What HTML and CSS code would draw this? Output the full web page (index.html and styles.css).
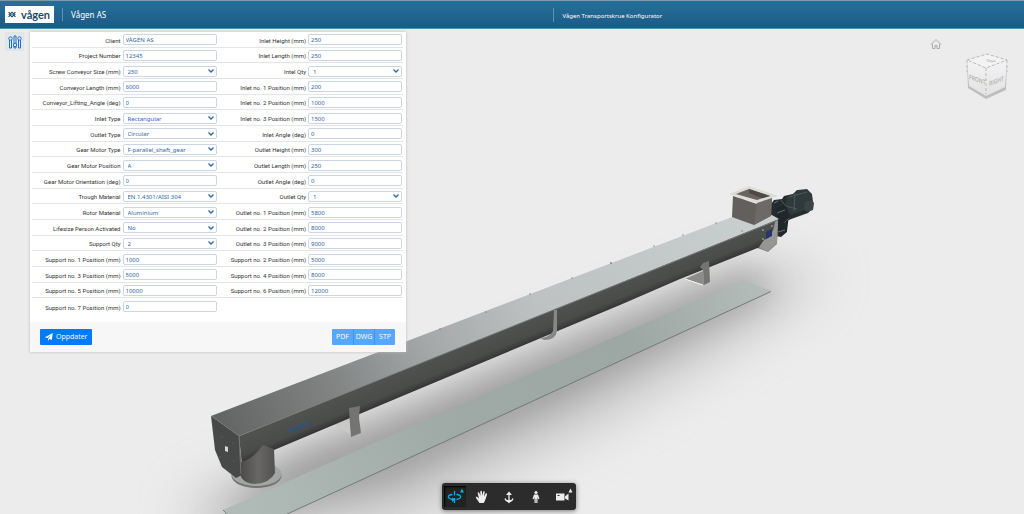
FILE: index.html
```
<!DOCTYPE html>
<html lang="en">
<head>
<meta charset="utf-8">
<meta name="viewport" content="width=device-width, initial-scale=1">
<title>Vågen Transportskrue Konfigurator</title>
<link rel="stylesheet" href="styles.css">
</head>
<body>
<header class="topbar">
  <div class="brand">
    <div class="logo">
      <svg class="logo-mark" viewBox="0 0 14 12" aria-hidden="true"><path d="M1 2l3 3 3-3 3 3 3-3M1 10l3-3 3 3 3-3 3 3M1 6h2M6 6h2M11 6h2"/></svg>
      <span>vågen</span>
    </div>
    <span class="company">Vågen AS</span>
  </div>
  <h1 class="title">Vågen Transportskrue Konfigurator</h1>
</header>

<svg class="scene" viewBox="0 0 1024 514" preserveAspectRatio="xMinYMin slice" role="img" aria-label="3D view of the screw conveyor">
  <defs>
    <linearGradient id="lid" gradientUnits="userSpaceOnUse" x1="225" y1="425" x2="755" y2="210">
      <stop offset="0" stop-color="#646665"/><stop offset=".2" stop-color="#828484"/><stop offset=".38" stop-color="#a4a8a8"/><stop offset=".58" stop-color="#bdc1c2"/><stop offset="1" stop-color="#c9cecf"/>
    </linearGradient>
    <linearGradient id="side" gradientUnits="userSpaceOnUse" x1="400" y1="371" x2="410" y2="395">
      <stop offset="0" stop-color="#505250"/><stop offset=".65" stop-color="#4a4c4a"/><stop offset=".85" stop-color="#3a3b3a"/><stop offset="1" stop-color="#292a29"/>
    </linearGradient>
    <linearGradient id="pipe"><stop offset="0" stop-color="#4c4b49"/><stop offset=".5" stop-color="#696765"/><stop offset="1" stop-color="#53514f"/></linearGradient>
    <linearGradient id="leftface" x2="0" y2="1"><stop offset="0" stop-color="#f4f4f4"/><stop offset="1" stop-color="#e2e2e2"/></linearGradient>
    <linearGradient id="plate" gradientUnits="userSpaceOnUse" x1="250" y1="510" x2="760" y2="285">
      <stop offset="0" stop-color="#b0bbb7"/><stop offset=".4" stop-color="#9fa9a5"/><stop offset=".75" stop-color="#9da7a3"/><stop offset="1" stop-color="#b3bcb8"/>
    </linearGradient>
    <filter id="soft" x="-30%" y="-30%" width="160%" height="160%"><feGaussianBlur stdDeviation="17"/></filter>
    <filter id="softer" x="-30%" y="-30%" width="160%" height="160%"><feGaussianBlur stdDeviation="27"/></filter>
  </defs>
  <path d="M190 500L400 420 560 340 760 265 830 275 720 350 600 420 400 520 200 550z" fill="#a8a8a8" opacity=".6" filter="url(#softer)"/>
  <path d="M285 455L560 346 745 268 775 290 560 400 390 480 220 520z" fill="#777" opacity=".52" filter="url(#soft)"/>
  <path d="M223 510L743 280 771 291 287 514H226z" fill="url(#plate)"/>
  <path d="M285 515L771 291.500M223 510l4 4" fill="none" stroke="#727b78"/>

  <!-- gear motor -->
  <path d="M771 204l3-4 8-1 2-3 9-2 4-4 4 1 7 1 4 4 1 12-5 5-14 5-8 3 1 11-6 5-10-2-2-9z" fill="#262d2e"/>
  <path d="M787 197l8-4 3-3 9-1 5 5 1 9-4 6-10 3-8 3-6-6z" fill="#303a3b"/>
  <path d="M776 208l10-4 3 11-2 16-6 4-6-5z" fill="#20272a"/>
  <path d="M780 199l6 7 11 3M789 197l18-5M795 193l-1 18M789 218l-5 5" stroke="#4c595c" fill="none"/>
  <path d="M805 202l7-2 2 3-1 7-6 2-3-3z" fill="#394445"/>
  <path d="M774 203l4-2M777 213l8-3M778 232l7-2" stroke="#66706f" fill="none"/>

  <!-- supports behind the trough -->
  <path d="M333 424l17-8 3 20z" fill="#c9c9c7"/>
  <path d="M685 279l18-8 1 14z" fill="#8c8d8b"/><path d="M685 279l18 6" stroke="#f6f6f6"/>
  <path d="M757 248l14-13 7-15-1 24-9 8z" fill="#8b8d8b"/>

  <!-- trough -->
  <path d="M239 436L778 219 776 232Q774 243 760 247L680 279 620 305 400 397 274 450 242 466z" fill="url(#side)"/>
  <path d="M211 416L732 217 740 197 779 219 239 436z" fill="url(#lid)"/>
  <path d="M239 436L778 220" stroke="#777a79" fill="none"/>
  <g fill="#777b7b"><circle cx="440" cy="329" r=".7"/><circle cx="486" cy="312" r=".7"/><circle cx="530" cy="294" r=".7"/><circle cx="572" cy="278" r=".7"/><circle cx="611" cy="263" r=".9"/><circle cx="654" cy="246" r=".7"/><circle cx="683" cy="235" r=".7"/><circle cx="716" cy="223" r=".7"/><circle cx="742" cy="231" r=".7"/></g>

  <!-- round outlet -->
  <ellipse cx="256.500" cy="476" rx="25" ry="12" fill="#717371"/>
  <ellipse cx="256.500" cy="474" rx="25" ry="12" fill="#a2a5a3"/>
  <path d="M241 462q12-3 22-17l11 4 1 24q-5 10-20 11-10 0-14-7z" fill="url(#pipe)"/>
  <path d="M211 416l28 20 3 39-6 3-14-11-7-17z" fill="#464948"/>
  <path d="M212 416l27 20 2 38" stroke="#707372" fill="none"/>
  <path d="M225 446l3 1v5l-3-1z" fill="#d5d5d5"/>
  <g fill="#707372"><circle cx="222" cy="437" r=".6"/><circle cx="233" cy="443" r=".6"/><circle cx="220" cy="457" r=".6"/><circle cx="234" cy="461" r=".6"/></g>

  <!-- support legs -->
  <path d="M349 408l11-2-1 12 2 15-10 4-1-12z" fill="#747472"/>
  <path d="M554 310h3v21q-1 9-13 9l-4-2q9 0 13-7z" fill="#858886"/>
  <path d="M700 267l3-4 6-2 1 21-6 3-1-15z" fill="#747472"/>
  <path d="M764 240q9-3 11-18l3-2-1 22-9 9-9-4z" fill="#969795"/>
  <path d="M766 232l6-3v7l-6 3z" fill="#27356e"/><g fill="#c9cac8"><circle cx="763" cy="230" r=".8"/><circle cx="763" cy="239" r=".8"/><circle cx="772" cy="226" r=".8"/></g>

  <!-- rectangular inlet -->
  <path d="M733 196l24 8 15-6-1 18-17 9-22-8z" fill="#625f5d"/>
  <path d="M757 202l15-5-1 18-17 10z" fill="#6d6966"/>
  <path d="M729 194l20-8 29 10-21 7z" fill="#dcdcd7"/>
  <path d="M736 194l13-5 21 7-13 4z" fill="#68635e"/>
  <path d="M749 189l21 7-8 2-13-5z" fill="#4c4946"/>
  <text class="decal" transform="translate(289 433) rotate(-21)">VÅGEN AS</text>

  <!-- navigation cube -->
  <g class="cube">
    <path d="M967 60l20-6 20 6-1 30-20 9-18-11z" fill="#bebebe"/>
    <path d="M967 60l20-6 20 6-21 8z" fill="#f3f3f3"/>
    <path d="M967 60l19 8v28l-17-10z" fill="url(#leftface)"/>
    <path d="M1007 60l-21 8v28l19-9z" fill="url(#leftface)"/>
    <path d="M967 60l20-6 20 6-21 8zM986 68v26M967 60v12M1007 60v12" fill="none" stroke="#bbb" stroke-dasharray="3 2"/>
    <text transform="matrix(1 .35 0 1.300 969 79)">FRONT</text>
    <text transform="matrix(1 -.35 0 1.300 989 86)">RIGHT</text>
    <text transform="matrix(1 .2 -.8 .5 984 61)">TOP</text>
  </g>
</svg>

<main class="workspace">
  <button class="settings" type="button" aria-label="Parameters">
    <svg viewBox="0 0 14 14" aria-hidden="true"><path class="thin" d="M1.500 5v8h2V5M6 9V1h2v8M6 11v2h2v-2M10.500 5v8h2V5"/><circle cx="2.500" cy="3.500" r="1.700"/><circle cx="7" cy="10" r="1.700"/><circle cx="11.500" cy="3.500" r="1.700"/></svg>
  </button>

  <form class="panel">
    <div class="params">
      <div class="field"><label for="client">Client</label><input id="client" value="VÅGEN AS"></div>
      <div class="field"><label for="ih">Inlet Height (mm)</label><input id="ih" value="250"></div>
      <div class="field"><label for="pn">Project Number</label><input id="pn" value="12345"></div>
      <div class="field"><label for="il">Inlet Length (mm)</label><input id="il" value="250"></div>
      <div class="field"><label for="size">Screw Conveyor Size (mm)</label><select id="size"><option>250</option></select></div>
      <div class="field"><label for="iq">Intel Qty</label><select id="iq"><option>1</option></select></div>
      <div class="field"><label for="cl">Conveyor Length (mm)</label><input id="cl" value="6000"></div>
      <div class="field"><label for="i1">Inlet no. 1 Position (mm)</label><input id="i1" value="200"></div>
      <div class="field"><label for="la">Conveyor_Lifting_Angle (deg)</label><input id="la" value="0"></div>
      <div class="field"><label for="i2">Inlet no. 2 Position (mm)</label><input id="i2" value="1000"></div>
      <div class="field"><label for="it">Inlet Type</label><select id="it"><option>Rectangular</option></select></div>
      <div class="field"><label for="i3">Inlet no. 3 Position (mm)</label><input id="i3" value="1500"></div>
      <div class="field"><label for="ot">Outlet Type</label><select id="ot"><option>Circular</option></select></div>
      <div class="field"><label for="ia">Inlet Angle (deg)</label><input id="ia" value="0"></div>
      <div class="field"><label for="gt">Gear Motor Type</label><select id="gt"><option>F-parallel_shaft_gear</option></select></div>
      <div class="field"><label for="oh">Outlet Height (mm)</label><input id="oh" value="300"></div>
      <div class="field"><label for="gp">Gear Motor Position</label><select id="gp"><option>A</option></select></div>
      <div class="field"><label for="ol">Outlet Length (mm)</label><input id="ol" value="250"></div>
      <div class="field"><label for="go">Gear Motor Orientation (deg)</label><input id="go" value="0"></div>
      <div class="field"><label for="oa">Outlet Angle (deg)</label><input id="oa" value="0"></div>
      <div class="field"><label for="tm">Trough Material</label><select id="tm"><option>EN 1.4301/AISI 304</option></select></div>
      <div class="field"><label for="oq">Outlet Qty</label><select id="oq"><option>1</option></select></div>
      <div class="field"><label for="rm">Rotor Material</label><select id="rm"><option>Aluminium</option></select></div>
      <div class="field"><label for="o1">Outlet no. 1 Position (mm)</label><input id="o1" value="5800"></div>
      <div class="field"><label for="lp">Lifesize Person Activated</label><select id="lp"><option>No</option></select></div>
      <div class="field"><label for="o2">Outlet no. 2 Position (mm)</label><input id="o2" value="8000"></div>
      <div class="field"><label for="sq">Support Qty</label><select id="sq"><option>2</option></select></div>
      <div class="field"><label for="o3">Outlet no. 3 Position (mm)</label><input id="o3" value="9000"></div>
      <div class="field"><label for="s1">Support no. 1 Position (mm)</label><input id="s1" value="1000"></div>
      <div class="field"><label for="s2">Support no. 2 Position (mm)</label><input id="s2" value="5000"></div>
      <div class="field"><label for="s3">Support no. 3 Position (mm)</label><input id="s3" value="5000"></div>
      <div class="field"><label for="s4">Support no. 4 Position (mm)</label><input id="s4" value="8000"></div>
      <div class="field"><label for="s5">Support no. 5 Position (mm)</label><input id="s5" value="10000"></div>
      <div class="field"><label for="s6">Support no. 6 Position (mm)</label><input id="s6" value="12000"></div>
      <div class="field"><label for="s7">Support no. 7 Position (mm)</label><input id="s7" value="0"></div>
    </div>
    <footer class="actions">
      <button class="update" type="button"><svg viewBox="0 0 16 16" aria-hidden="true"><path d="M15.500 0L13.500 14 8.500 12 6 16V11.500L13 4 4.500 10.500 0 8.500z"/></svg>Oppdater</button>
      <div class="exports"><button type="button">PDF</button><button type="button">DWG</button><button type="button">STP</button></div>
    </footer>
  </form>

  <button class="home" type="button" aria-label="Home view"><svg viewBox="0 0 12 12" aria-hidden="true"><path d="M1 6.500L6 1.500l5 5M2.500 6v4.500H5V7.500h2v3h2.500V6"/></svg></button>
</main>

<nav class="tools" aria-label="View tools">
  <button class="tool active" type="button" aria-label="Orbit"><svg viewBox="0 0 22 22" aria-hidden="true"><path class="line" d="M10.500 5v4.500M10.500 12v5M8.500 8.500C3 9 3 12.500 8.500 13.500M12.500 8.500c5.500.5 5.500 4 0 5"/><path d="M8 11.500l3.500 2L8 16zM16 6.500l2-4 2 4z"/></svg></button>
  <button class="tool" type="button" aria-label="Pan"><svg viewBox="0 0 22 22" aria-hidden="true"><path d="M8.500 17L5 12c-.5-1 .8-1.700 1.600-.8L8 12.500 6.700 7.200c-.2-1.100 1.200-1.400 1.500-.4L9.400 10 9.300 5.600c0-1.100 1.500-1.100 1.600 0l.4 4.200.9-4c.3-1 1.700-.7 1.500.4l-.6 4.400 1.500-2.900c.5-.9 1.800-.3 1.400.7L14.300 14l-1.600 3z"/></svg></button>
  <button class="tool" type="button" aria-label="Zoom"><svg viewBox="0 0 22 22" aria-hidden="true"><path class="line" d="M11 7v8M7 12.500q1 3 4 3t4-3"/><path d="M8 9L11 5.500 14 9zM8.500 14l2.500 3.500 2.500-3.500z"/></svg></button>
  <button class="tool" type="button" aria-label="First person"><svg viewBox="0 0 22 22" aria-hidden="true"><circle cx="11" cy="6.500" r="1.600"/><path d="M9 8.500h4l1.500 4.500-1 .2-1-2V17h-1.200v-4h-.6v4H9.500v-5.800l-1 2-1-.2z"/></svg></button>
  <button class="tool" type="button" aria-label="Camera"><svg viewBox="0 0 22 22" aria-hidden="true"><path fill-rule="evenodd" d="M4 7.500h8.500v7H4zM13 10.500L16.500 7.500v7L13 12.500zM5.500 9v1h2V9z"/><path d="M16.500 6.500l2-4 2 4z"/></svg></button>
</nav>
</body>
</html>
```
FILE: styles.css
```
* { box-sizing: border-box; }
body {
  margin: 0;
  min-height: 100vh;
  display: flex;
  flex-direction: column;
  overflow: hidden;
  background: #ececec;
  font-family: "Open Sans", "Noto Sans", sans-serif;
  color: #333;
}
button, input, select { font: inherit; margin: 0; }
svg { display: block; }

.topbar {
  position: relative;
  z-index: 1;
  display: grid;
  grid-template-columns: 54% 1fr;
  align-items: center;
  height: 29px;
  padding-left: 1px;
  background: linear-gradient(#27709a, #1b5b86);
  border-top: 1px solid #7b9cab;
  border-bottom: 1px solid #5092b8;
  color: #fff;
  font-family: "Noto Sans", sans-serif;
}
.brand { display: flex; align-items: center; gap: 8px; padding-left: 4px; }
.logo {
  display: flex;
  align-items: center;
  gap: 5px;
  height: 17px;
  padding: 0 4px 0 3px;
  background: #fff;
  color: #174a68;
  font: 700 11px/16px Lato, sans-serif;
}
.logo-mark { width: 8px; height: 7px; fill: none; stroke: #174a68; stroke-width: 2; }
.company, .title { border-left: 1px solid #5d91ae; line-height: 12px; padding: 1px 0 0 8px; }
.company { font-size: 8px; }
.title { margin: 0; font-size: 6px; font-weight: 400; padding-top: 2px; }

.scene { position: absolute; inset: 0; width: 100%; height: 100%; }
.decal { font-size: 5px; font-weight: 700; fill: #1d5596; }
.cube text { font-size: 5px; font-weight: 600; fill: #b0b0b0; }

.workspace { position: relative; flex: 1; display: flex; align-items: flex-start; padding: 3px 82px 0 5px; }
.settings {
  display: grid;
  place-items: center;
  width: 19px;
  height: 19px;
  margin-right: 6px;
  padding: 0;
  border: 1px solid #e1e4e7;
  background: #e4e7ea;
}
.settings svg { width: 14px; height: 14px; fill: #e4e7ea; stroke: #1a73cf; stroke-width: 1; }
.settings .thin { fill: none; }

.panel { width: 376px; background: #fff; box-shadow: 0 0 3px #bbb; }
.params {
  display: grid;
  grid-template-columns: 1fr 1fr;
  grid-auto-rows: 1fr;
  min-height: 282px;
  margin: 0 3px 8px 2px;
}
.field {
  display: grid;
  grid-template-columns: 1fr 94px;
  align-items: center;
  gap: 2px;
  padding: 1px 1px 0 0;
  border-bottom: 1px solid #e3e5e8;
}
.field:last-child { border-bottom: 0; }
.field label {
  padding-top: 2px;
  font-family: Roboto, "Noto Sans", sans-serif;
  font-size: 6px;
  line-height: 8px;
  text-align: right;
  white-space: nowrap;
}
.field input, .field select {
  width: 100%;
  height: 11px;
  padding: 1px 2px 0;
  border: 1px solid #cbd6e2;
  border-radius: 2px;
  background: #fff;
  color: #2f66a6;
  font-family: "Noto Sans", sans-serif;
  font-size: 6px;
  line-height: 8px;
}
.field select {
  appearance: none;
  padding-left: 4px;
  background: #fff url("data:image/svg+xml,%3Csvg xmlns='http://www.w3.org/2000/svg' viewBox='0 0 6 4'%3E%3Cpath d='M.5.5L3 3 5.500.5' fill='none' stroke='%232d69a8' stroke-width='1.300'/%3E%3C/svg%3E") no-repeat right 2px center / 6px 4px;
}
.actions {
  display: flex;
  justify-content: space-between;
  align-items: center;
  height: 30px;
  padding: 0 11px 0 10px;
  background: #f7f7f7;
}
.actions button { height: 16px; border: 0; color: #fff; font-size: 7px; line-height: 16px; }
.update { display: flex; align-items: center; gap: 3px; padding: 0 5px; border-radius: 1px; background: #007bff; }
.update svg { width: 8px; height: 8px; fill: #fff; }
.exports { display: flex; border-radius: 1px; overflow: hidden; }
.exports button { width: 21px; padding: 0; background: #57a7ff; }
.exports button + button { border-left: 1px solid #3c97fa; }
.home { margin: 6px 0 0 auto; padding: 0; border: 0; background: none; }
.home svg { width: 12px; height: 12px; fill: none; stroke: #aaa; }

.tools {
  position: absolute;
  bottom: 4px;
  left: 50%;
  display: flex;
  gap: 5px;
  padding: 3px 2px;
  transform: translateX(-50%);
  margin-left: -3px;
  border-radius: 3px;
  background: #2c2c2c;
  box-shadow: 0 1px 5px #777;
}
.tool { width: 22px; height: 21px; padding: 0; border: 0; background: none; fill: #eee; color: #eee; }
.tool svg { width: 22px; height: 22px; }
.tool .line { fill: none; stroke: currentColor; stroke-width: 1.3; }
.tool.active { background: #222; fill: #00aeef; color: #00aeef; box-shadow: inset 1px 1px 2px #000; }
```
